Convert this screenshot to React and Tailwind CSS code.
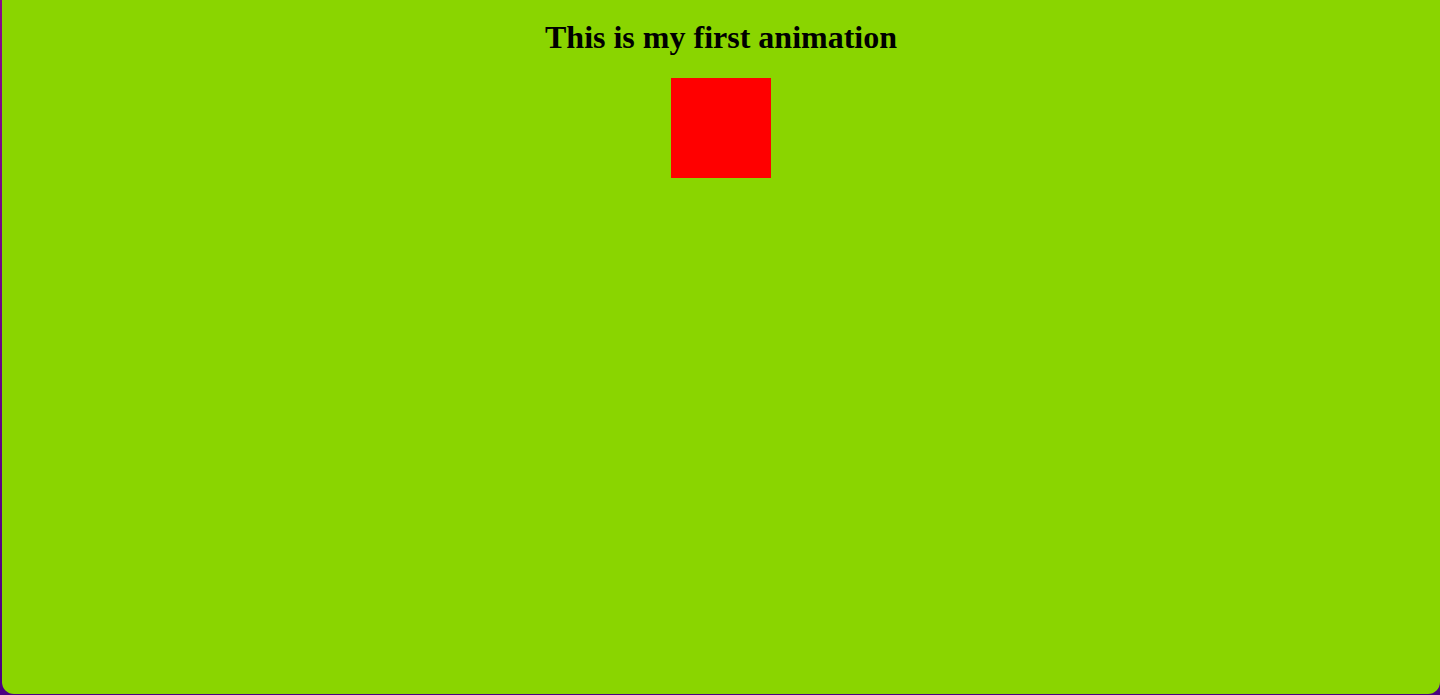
export default function App() {
  return (
    <div className="h-[695px] w-full bg-[linear-gradient(to_bottom,#8a0a8a,#4b0082)] overflow-hidden">
      <div className="ml-[2px] h-[694px] rounded-b-[12px] bg-[#8ad500] flex flex-col items-center">
        <h1 className="mt-[19px] text-[32px] leading-[37px] font-bold text-black font-['Liberation_Serif',serif]">
          This is my first animation
        </h1>
        <div className="mt-[22px] w-[100px] h-[100px] bg-[#ff0000]" />
      </div>
    </div>
  );
}
